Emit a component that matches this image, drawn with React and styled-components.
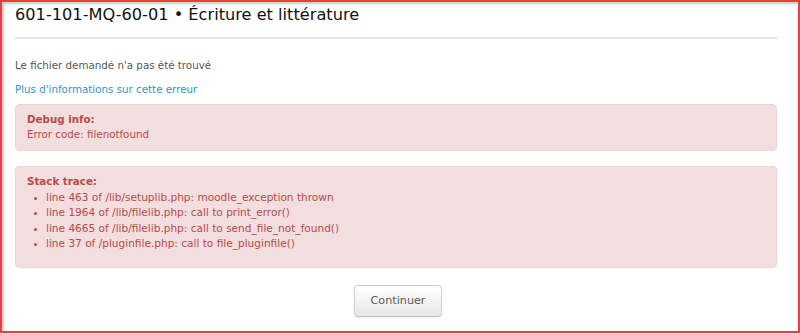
import React from "react";
import styled, { createGlobalStyle } from "styled-components";

const Global = createGlobalStyle`
  html, body { margin: 0; padding: 0; background: #fff; }
  body { font-family: "DejaVu Sans", Verdana, sans-serif; }
`;

const Frame = styled.div`
  box-sizing: border-box;
  width: 800px;
  height: 333px;
  border: 2px solid #f03c3c;
  box-shadow: inset 2px 2px 3px rgba(0, 0, 0, 0.22);
  padding: 0 21px 0 13px;
  overflow: hidden;
`;

const Header = styled.header`
  padding-top: 3px;
  padding-bottom: 12px;
  border-bottom: 2px solid #e4e4e4;
`;

const Title = styled.h1`
  margin: 0;
  font-size: 16.2px;
  line-height: 20px;
  font-weight: normal;
  color: #111;
`;

const Message = styled.p`
  margin: ${(p) => p.$top || 0}px 0 0;
  font-size: 10.3px;
  line-height: 16px;
  color: #555;
`;

const Link = styled.a`
  color: #2a9bb5;
  text-decoration: none;
`;

const Alert = styled.div`
  margin-top: ${(p) => p.$top}px;
  background: #f2dede;
  border: 1px solid #eed3d7;
  border-radius: 4px;
  padding: ${(p) => p.$pad};
  color: #b94a48;
  font-size: 10.3px;
  line-height: ${(p) => p.$lh}px;
`;

const Label = styled.div`
  font-weight: bold;
`;

const List = styled.ul`
  margin: 0;
  padding-left: 19px;
  font-size: 10.55px;
  li::marker { font-size: 9px; }
`;

const ButtonRow = styled.div`
  display: flex;
  justify-content: center;
  padding-left: 4px;
  margin-top: 17px;
`;

const Button = styled.button`
  width: 88px;
  height: 32px;
  border: 1px solid #cfcfcf;
  border-bottom-color: #bdbdbd;
  border-radius: 4px;
  background: linear-gradient(#ffffff, #e8e8e8);
  box-shadow: 0 1px 2px rgba(0, 0, 0, 0.06);
  color: #5a5a5a;
  font-family: "DejaVu Sans", Verdana, sans-serif;
  font-size: 11.2px;
  padding: 0;
  cursor: pointer;
`;

const trace = [
  "line 463 of /lib/setuplib.php: moodle_exception thrown",
  "line 1964 of /lib/filelib.php: call to print_error()",
  "line 4665 of /lib/filelib.php: call to send_file_not_found()",
  "line 37 of /pluginfile.php: call to file_pluginfile()",
];

export default function App() {
  return (
    <>
      <Global />
      <Frame>
        <Header>
          <Title>601-101-MQ-60-01 • Écriture et littérature</Title>
        </Header>
        <Message $top={18}>Le fichier demandé n'a pas été trouvé</Message>
        <Message $top={8}>
          <Link href="#">Plus d'informations sur cette erreur</Link>
        </Message>
        <Alert $top={7} $pad="7px 11px 8px" $lh={15}>
          <Label>Debug info:</Label>
          <div>Error code: filenotfound</div>
        </Alert>
        <Alert $top={15} $pad="7px 11px 15px" $lh={15.6}>
          <Label>Stack trace:</Label>
          <List>
            {trace.map((t) => (
              <li key={t}>{t}</li>
            ))}
          </List>
        </Alert>
        <ButtonRow>
          <Button>Continuer</Button>
        </ButtonRow>
      </Frame>
    </>
  );
}
